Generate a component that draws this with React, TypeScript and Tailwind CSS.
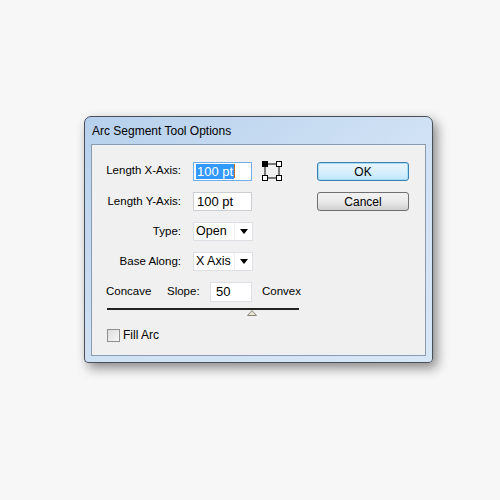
import React from "react";

const font = { fontFamily: '"Liberation Sans", Arial, sans-serif' };

function BoundsIcon() {
  return (
    <svg width="21" height="20" viewBox="0 0 21 20" className="block">
      <rect x="3" y="3" width="14" height="14" fill="none" stroke="#000" strokeWidth="1" />
      <rect x="0.5" y="0.5" width="5" height="5" fill="#000" stroke="#000" />
      <rect x="14.5" y="0.5" width="5" height="5" fill="#fff" stroke="#000" />
      <rect x="0.5" y="14.5" width="5" height="5" fill="#fff" stroke="#000" />
      <rect x="14.5" y="14.5" width="5" height="5" fill="#fff" stroke="#000" />
    </svg>
  );
}

function Select({ value }: { value: string }) {
  return (
    <div className="flex h-[19px] w-[60px] items-stretch border border-[#dcdfe3] bg-white text-[12.5px]">
      <div className="flex w-[41px] items-center border-r border-[#eceef0] pl-[2px] leading-none">
        {value}
      </div>
      <div className="flex flex-1 items-center justify-center">
        <svg width="8" height="5" viewBox="0 0 8 5">
          <path d="M0 0 H8 L4 5 Z" fill="#000" />
        </svg>
      </div>
    </div>
  );
}

export default function App() {
  return (
    <div className="h-[500px] w-[500px] bg-[#f7f7f7] pl-[84px] pt-[116px]" style={font}>
      <div className="flex h-[247px] w-[349px] flex-col rounded-t-[7px] rounded-b-[4px] border border-[#4a5058] bg-gradient-to-br from-[#b6d0ec] via-[#cfe1f4] to-[#d8e7f6] shadow-[4px_5px_12px_rgba(0,0,0,0.45)]">
        <div className="flex h-[27px] items-center pl-[7px] pt-[1px] text-[12px] text-black">
          Arc Segment Tool Options
        </div>
        <div className="mx-[6px] mb-[6px] flex flex-1 border border-[#8a9bb0] bg-[#f0f0f0] text-[11.5px] text-black">
          <div className="flex w-[225px] shrink-0 flex-col">
            <div className="grid grid-cols-[89px_auto] items-center gap-x-[12px] gap-y-[11px] pt-[16px]">
              <div className="text-right">Length X-Axis:</div>
              <div className="flex items-center gap-[10px]">
                <div className="flex h-[19px] w-[59px] items-center border border-[#6faee6] bg-white pl-[2px] text-[13px]">
                  <span className="bg-[#3399ff] px-[1px] leading-[15px] text-white">100 pt</span>
                  <span className="h-[14px] w-[1px] bg-[#c0702a]" />
                </div>
                <BoundsIcon />
              </div>
              <div className="text-right">Length Y-Axis:</div>
              <div className="flex h-[19px] w-[59px] items-center border border-[#cbcfd4] bg-white pl-[3px] text-[13px]">100 pt</div>
              <div className="text-right">Type:</div>
              <Select value="Open" />
              <div className="text-right">Base Along:</div>
              <Select value="X Axis" />
            </div>
            <div className="mt-[11px] flex items-center pl-[14px]">
              <span className="w-[61px]">Concave</span>
              <span className="w-[43px]">Slope:</span>
              <div className="flex h-[20px] w-[42px] items-center border border-[#dcdfe3] bg-white pl-[5px] text-[13px]">50</div>
              <span className="ml-[10px]">Convex</span>
            </div>
            <div className="ml-[15px] mt-[6px] h-[2px] w-[192px] bg-[#222]" />
            <div className="ml-[155px] flex h-[6px]">
              <svg width="10" height="6" viewBox="0 0 10 6">
                <path d="M5 0.5 L9.5 5.5 H0.5 Z" fill="#e6e2d6" stroke="#8a8678" strokeWidth="1" />
              </svg>
            </div>
            <div className="ml-[15px] mt-[10px] flex items-center gap-[3px]">
              <div className="h-[13px] w-[13px] border border-[#8e8f8f] bg-gradient-to-br from-[#dcdcdc] to-[#f8f8f8]" />
              <span className="text-[12px]">Fill Arc</span>
            </div>
          </div>
          <div className="flex flex-col gap-[11px] pt-[17px] text-[12px]">
            <div className="flex h-[19px] w-[92px] items-center justify-center rounded-[3px] border border-[#3c7fb1] bg-gradient-to-b from-[#eaf6fd] via-[#d9effc] to-[#bee6fd] shadow-[inset_0_0_0_1px_#a6dcf7]">
              OK
            </div>
            <div className="flex h-[19px] w-[92px] items-center justify-center rounded-[3px] border border-[#707070] bg-gradient-to-b from-[#f2f2f2] via-[#ebebeb] to-[#cfcfcf]">
              Cancel
            </div>
          </div>
        </div>
      </div>
    </div>
  );
}
